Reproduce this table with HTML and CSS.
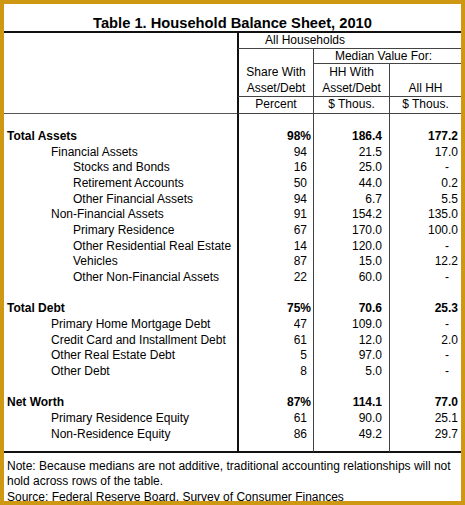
FILE: index.html
```html
<!DOCTYPE html>
<html lang="en">
<head>
    <meta charset="UTF-8">
    <meta name="viewport" content="width=device-width, initial-scale=1.0">
    <title>Household Balance Sheet, 2010</title>
    <link rel="stylesheet" href="styles.css">
</head>
<body>

    <div class="frame">
        <h2 class="title">Table 1. Household Balance Sheet, 2010</h2>

        <table class="sheet">
            <colgroup>
                <col class="col-label">
                <col class="col-share">
                <col class="col-hh">
                <col class="col-all">
            </colgroup>
            <thead>
                <tr class="head-a">
                    <th rowspan="4" class="corner"></th>
                    <th colspan="3" class="group">All Households</th>
                </tr>
                <tr class="head-b">
                    <th class="share open"></th>
                    <th colspan="2" class="median">Median Value For:</th>
                </tr>
                <tr class="head-c">
                    <th class="share">Share With<br>Asset/Debt</th>
                    <th class="hh">HH With<br>Asset/Debt</th>
                    <th class="all">All HH</th>
                </tr>
                <tr class="head-d">
                    <th class="share">Percent</th>
                    <th class="hh">$ Thous.</th>
                    <th class="all">$ Thous.</th>
                </tr>
            </thead>
            <tbody>
                <tr><td></td><td class="share"></td><td class="hh"></td><td class="all"></td></tr>

                <tr class="total">
                    <td>Total Assets</td><td class="share">98%</td><td class="hh">186.4</td><td class="all">177.2</td>
                </tr>
                <tr class="lvl-1">
                    <td>Financial Assets</td><td class="share">94</td><td class="hh">21.5</td><td class="all">17.0</td>
                </tr>
                <tr class="lvl-2">
                    <td>Stocks and Bonds</td><td class="share">16</td><td class="hh">25.0</td><td class="all dash">-</td>
                </tr>
                <tr class="lvl-2">
                    <td>Retirement Accounts</td><td class="share">50</td><td class="hh">44.0</td><td class="all">0.2</td>
                </tr>
                <tr class="lvl-2">
                    <td>Other Financial Assets</td><td class="share">94</td><td class="hh">6.7</td><td class="all">5.5</td>
                </tr>
                <tr class="lvl-1">
                    <td>Non-Financial Assets</td><td class="share">91</td><td class="hh">154.2</td><td class="all">135.0</td>
                </tr>
                <tr class="lvl-2">
                    <td>Primary Residence</td><td class="share">67</td><td class="hh">170.0</td><td class="all">100.0</td>
                </tr>
                <tr class="lvl-2">
                    <td>Other Residential Real Estate</td><td class="share">14</td><td class="hh">120.0</td><td class="all dash">-</td>
                </tr>
                <tr class="lvl-2">
                    <td>Vehicles</td><td class="share">87</td><td class="hh">15.0</td><td class="all">12.2</td>
                </tr>
                <tr class="lvl-2">
                    <td>Other Non-Financial Assets</td><td class="share">22</td><td class="hh">60.0</td><td class="all dash">-</td>
                </tr>

                <tr><td></td><td class="share"></td><td class="hh"></td><td class="all"></td></tr>

                <tr class="total">
                    <td>Total Debt</td><td class="share">75%</td><td class="hh">70.6</td><td class="all">25.3</td>
                </tr>
                <tr class="lvl-1">
                    <td>Primary Home Mortgage Debt</td><td class="share">47</td><td class="hh">109.0</td><td class="all dash">-</td>
                </tr>
                <tr class="lvl-1">
                    <td>Credit Card and Installment Debt</td><td class="share">61</td><td class="hh">12.0</td><td class="all">2.0</td>
                </tr>
                <tr class="lvl-1">
                    <td>Other Real Estate Debt</td><td class="share">5</td><td class="hh">97.0</td><td class="all dash">-</td>
                </tr>
                <tr class="lvl-1">
                    <td>Other Debt</td><td class="share">8</td><td class="hh">5.0</td><td class="all dash">-</td>
                </tr>

                <tr><td></td><td class="share"></td><td class="hh"></td><td class="all"></td></tr>

                <tr class="total">
                    <td>Net Worth</td><td class="share">87%</td><td class="hh">114.1</td><td class="all">77.0</td>
                </tr>
                <tr class="lvl-1">
                    <td>Primary Residence Equity</td><td class="share">61</td><td class="hh">90.0</td><td class="all">25.1</td>
                </tr>
                <tr class="lvl-1">
                    <td>Non-Residence Equity</td><td class="share">86</td><td class="hh">49.2</td><td class="all">29.7</td>
                </tr>

                <!-- Abstand bis zur unteren Linie -->
                <tr class="tail"><td></td><td class="share"></td><td class="hh"></td><td class="all"></td></tr>
            </tbody>
        </table>

        <p class="note">
            Note: Because medians are not additive, traditional accounting relationships will not hold across rows of the table.<br>
            Source: Federal Reserve Board, Survey of Consumer Finances
        </p>
    </div>

</body>
</html>
```

FILE: styles.css
```css
body {
    margin: 0;
    background: #fff;
    font-family: 'Liberation Sans', Arial, sans-serif;
    color: #000;
}

.frame {
    width: 465px;
    height: 505px;
    box-sizing: border-box;
    border: 4px solid #cf9812;
    background: #fff;
    overflow: hidden;
}

.title {
    margin: 0;
    height: 27px;
    box-sizing: border-box;
    padding-top: 11px;
    line-height: 16px;
    font-size: 14.7px;
    font-weight: bold;
    text-align: center;
}

/* Tabelle */
.sheet {
    width: 457px;
    table-layout: fixed;
    border-collapse: separate;
    border-spacing: 0;
    border-top: 2px solid #111;
    font-size: 12px;
}

.col-label { width: 233px; }
.col-share { width: 76px; }
.col-hh { width: 76px; }
.col-all { width: 72px; }

.sheet th,
.sheet td {
    padding: 0;
    box-sizing: border-box;
    font-weight: normal;
    white-space: nowrap;
}

.sheet .share { border-left: 2px solid #111; }
.sheet .hh,
.sheet .all { border-left: 1px solid #444; }

/* Kopfzeilen */
.head-a th { height: 16px; line-height: 15px; }
.head-b th { height: 15px; line-height: 14px; }
.head-c th { line-height: 16px; }
.head-d th { height: 16.5px; line-height: 15.5px; }

.corner { border-bottom: 1px solid #555; }

.group {
    text-align: left;
    padding-left: 26px !important;
    border-left: 2px solid #111;
    border-bottom: 1px solid #444;
}

.median {
    text-align: center;
    padding-right: 8px !important;
    border-left: 1px solid #444;
    border-bottom: 1px solid #444;
}

.head-c th,
.head-d th {
    text-align: center;
    vertical-align: bottom;
    border-bottom: 1px solid #444;
}

.head-b .open { border-bottom: none; }

/* Datenzeilen */
.sheet tbody td {
    height: 15.65px;
    line-height: 15.65px;
    text-align: right;
}

.sheet tbody td:first-child {
    text-align: left;
    padding-left: 3px;
}

.sheet tbody .share { padding-right: 6px; }
.sheet tbody .hh { padding-right: 7px; }
.sheet tbody .all { padding-right: 3px; }
.sheet tbody .all.dash { padding-right: 12px; }

.total td { font-weight: bold; }
.sheet tbody .total .share { padding-right: 2px; }

.sheet tbody .lvl-1 td:first-child { padding-left: 47px; }
.sheet tbody .lvl-2 td:first-child { padding-left: 69px; }

.sheet tbody .tail td {
    height: 10.35px;
    line-height: 8px;
    border-bottom: 2px solid #111;
}

.note {
    margin: 0;
    padding: 6px 3px 0;
    font-size: 12px;
    line-height: 15.5px;
}
```
